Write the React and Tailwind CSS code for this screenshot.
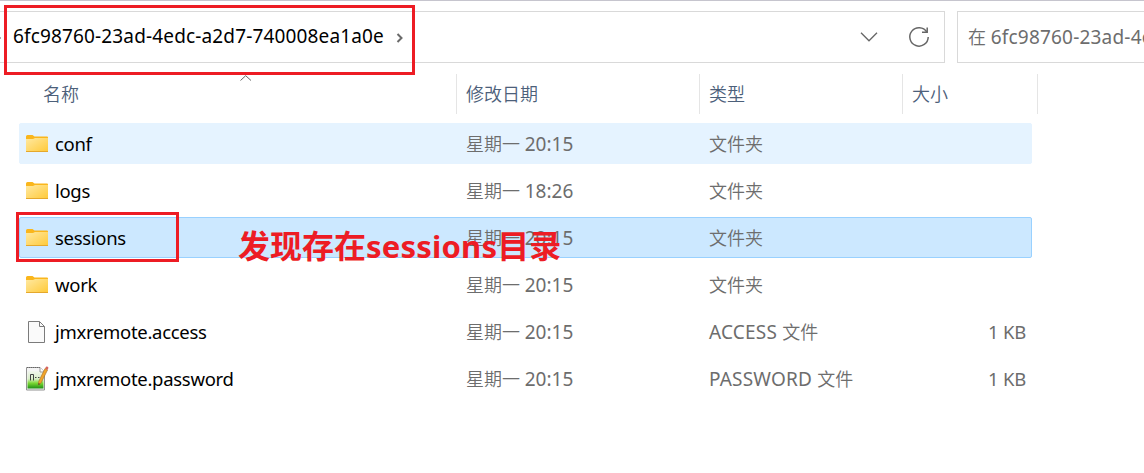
import { clsx } from 'clsx'

const files = [
  { name: 'conf', icon: 'folder', time: '20:15', type: '文件夹', state: 'hover' },
  { name: 'logs', icon: 'folder', time: '18:26', type: '文件夹' },
  { name: 'sessions', icon: 'folder', time: '20:15', type: '文件夹', state: 'selected' },
  { name: 'work', icon: 'folder', time: '20:15', type: '文件夹' },
  { name: 'jmxremote.access', icon: 'file', time: '20:15', ext: 'ACCESS', type: '文件', size: '1 KB' },
  { name: 'jmxremote.password', icon: 'notepad', time: '20:15', ext: 'PASSWORD', type: '文件', size: '1 KB' },
]

function FolderIcon() {
  return (
    <svg className="w-[22px] h-[18px]" viewBox="0 0 22 18">
      <defs>
        <linearGradient id="folder" x1="0" y1="0" x2="1" y2="1">
          <stop offset="0" stopColor="#ffe9a2" />
          <stop offset="1" stopColor="#ffc937" />
        </linearGradient>
      </defs>
      <path d="M0 1.5Q0 0 1.5 0H6.5L8.500 1.500H21Q22 1.500 22 2.500V8H0z" fill="#fab61c" />
      <path d="M0 4H7L9 3H22V17H0z" fill="url(#folder)" />
      <path d="M0 16H22V16.5Q22 17 21.5 17H.5Q0 17 0 16.500z" fill="#e5a82c" />
    </svg>
  )
}

function FileIcon() {
  return (
    <svg className="w-[22px] h-[24px]" viewBox="0 0 22 24" fill="none" stroke="#7b7b7b">
      <path d="M2.500 1.500H13.500L18.500 6.500V22.500H2.500z" fill="#fafafa" />
      <path d="M13.500 1.500V6.500H18.500" />
    </svg>
  )
}

function NotepadIcon() {
  return (
    <svg className="w-[23px] h-[25px]" viewBox="0 0 23 25">
      <defs>
        <linearGradient id="pad" x1="0" y1="0" x2="0" y2="1">
          <stop offset="0" stopColor="#f1f5ee" />
          <stop offset=".45" stopColor="#d9eec8" />
          <stop offset=".7" stopColor="#78d632" />
          <stop offset="1" stopColor="#1e8e16" />
        </linearGradient>
      </defs>
      <path d="M.5 1.500H14L18.500 6V24H.5z" fill="#f4f4f4" stroke="#929292" />
      <path d="M1.500 5H17.500V22.500H1.500z" fill="url(#pad)" />
      <path d="M1 1.500H15" stroke="#666" strokeDasharray="1 1" />
      <path d="M14 1.500V6H18.500" fill="#fff" stroke="#999" />
      <path d="M4.500 8.500V14.500M7.500 8.500V14.500M4.500 8.500H7.500M9 11.500H10.500M12 11.500H13.500" stroke="#444" fill="none" />
      <path d="M19 2.500L21.500 4L15 17L12.500 19L12.700 15.500z" fill="#f0a52a" stroke="#a66a22" strokeWidth=".6" />
      <path d="M19 2.500L20 .7Q21.500 0 22.500 1.800L21.500 4z" fill="#d5655f" />
      <path d="M12.500 19L12.600 17L14 17.900z" fill="#333" />
    </svg>
  )
}

const icons = { folder: FolderIcon, file: FileIcon, notepad: NotepadIcon }

// Latin runs are set a little heavier and larger than the Chinese text around them
function Latin({ children, className }) {
  return <span className={clsx('font-normal leading-none', className || 'text-[19px]')}>{children}</span>
}

function AddressBar() {
  return (
    <div className="flex h-[52px] mt-[10px] gap-3">
      <div className="relative flex items-center w-[945px] border-y border-r border-[#d9d9d9] shrink-0">
        <span className="absolute left-0 top-[25px] h-[2px] w-px bg-[#aaa]" />
        <span className="ml-[13px] mb-[2px] w-[371px] text-black whitespace-nowrap">
          <Latin className="text-[19px] tracking-[0.15px]">6fc98760-23ad-4edc-a2d7-740008ea1a0e</Latin>
        </span>
        <svg className="ml-[12px] mt-px w-[8px] h-[10px]" viewBox="0 0 8 10" fill="none" stroke="#6a6a6a" strokeWidth="2">
          <path d="M1.500 1L5.500 5L1.500 9" />
        </svg>
        <svg className="ml-auto w-[18px] h-[10px]" viewBox="0 0 18 10" fill="none" stroke="#666" strokeWidth="1.300">
          <path d="M1 .8L9 8.800L17 .8" />
        </svg>
        <svg className="ml-[30px] mr-[14px] w-[22px] h-[22px]" viewBox="0 0 22 22" fill="none" stroke="#666" strokeWidth="1.500">
          <path d="M18.800 6A9.200 9.200 0 1 0 20.200 11" />
          <path d="M19.200 1.500V6.300H14" />
        </svg>
      </div>
      <div className="flex items-center flex-1 pl-[10px] border-y border-l border-[#d9d9d9] text-[#6d6d6d] overflow-hidden">
        <span className="whitespace-nowrap">
          在&nbsp;<Latin className="text-[19px] tracking-[0.2px]">6fc98760-23ad-4e</Latin>
        </span>
      </div>
    </div>
  )
}

function Header() {
  return (
    <div className="relative flex h-[40px] mt-[11px] leading-[40px] text-[#4c607a]">
      <svg className="absolute left-[240px] top-[1px] w-[12px] h-[6px]" viewBox="0 0 12 6" fill="none" stroke="#666">
        <path d="M.5 5.500L5.700 .7L11 5.500" />
      </svg>
      <div className="w-[457px] pl-[43px] border-r border-[#e5e5e5]">名称</div>
      <div className="w-[243px] pl-[9px] border-r border-[#e5e5e5]">修改日期</div>
      <div className="w-[203px] pl-[9px] border-r border-[#e5e5e5]">类型</div>
      <div className="w-[135px] pl-[9px] border-r border-[#e5e5e5]">大小</div>
    </div>
  )
}

function FileRow({ file }) {
  const Icon = icons[file.icon]

  return (
    <div
      className={clsx(
        'flex items-center w-[1013px] h-[41px] rounded-[2px] border text-[#6d6d6d] whitespace-nowrap',
        file.state === 'hover' && 'bg-[#e5f3ff] border-[#e5f3ff]',
        file.state === 'selected' && 'bg-[#cce8ff] border-[#99d1ff]',
        !file.state && 'border-transparent'
      )}
    >
      <div className="flex items-center w-[446px] pl-[6px]">
        <div className="w-[29px]"><Icon /></div>
        <span className="pt-[2px] text-black">
          <Latin className="text-[18.5px] tracking-[-0.3px]">{file.name}</Latin>
        </span>
      </div>
      <div className="w-[243px] pt-[2px]">星期一&nbsp;<Latin>{file.time}</Latin></div>
      <div className="w-[203px] pt-[2px]">
        {file.ext && <Latin className="text-[19px] tracking-[0.2px]">{file.ext}&nbsp;</Latin>}
        {file.type}
      </div>
      <div className="flex-1 pt-[2px] pr-[5px] text-right">
        <Latin className="text-[18.5px] tracking-[-0.2px]">{file.size}</Latin>
      </div>
    </div>
  )
}

export default function App() {
  return (
    <div className="relative w-[1144px] h-[473px] overflow-hidden bg-white border-t border-[#c6c5ce] text-[18px] font-[350] font-['Noto_Sans','Noto_Sans_CJK_SC',sans-serif]">
      <AddressBar />
      <Header />
      <div className="flex flex-col gap-[6px] mt-[9px] pl-[19px]">
        {files.map((file) => <FileRow key={file.name} file={file} />)}
      </div>

      {/* red annotations on top of the window */}
      <div className="absolute left-[4px] top-[4px] w-[411px] h-[70px] border-3 border-[#ed1c24]" />
      <div className="absolute left-[16px] top-[211px] w-[163px] h-[50px] border-3 border-[#ed1c24]" />
      <div className="absolute left-[238px] top-[225px] leading-[40px] text-[32px] font-bold text-[#ed1c24] whitespace-nowrap">
        发现存在<span className="text-[31px] tracking-[0.2px]">sessions</span>目录
      </div>
    </div>
  )
}
